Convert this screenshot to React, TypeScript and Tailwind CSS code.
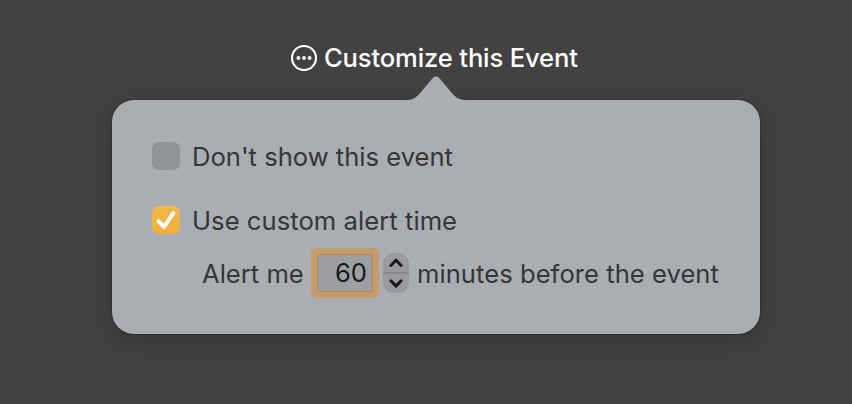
import React, { useState } from 'react'

function MoreIcon() {
  return (
    <svg width="28" height="28" viewBox="0 0 28 28" fill="none" className="shrink-0">
      <circle cx="14" cy="14" r="12" stroke="white" strokeWidth="2.1" />
      <circle cx="8.4" cy="14" r="1.9" fill="white" />
      <circle cx="14" cy="14" r="1.9" fill="white" />
      <circle cx="19.6" cy="14" r="1.9" fill="white" />
    </svg>
  )
}

function Checkbox({ checked, onClick }: { checked: boolean; onClick: () => void }) {
  return (
    <button
      role="checkbox"
      aria-checked={checked}
      onClick={onClick}
      className={`w-7 h-7 mb-[2px] shrink-0 rounded-[7px] ${checked ? 'bg-linear-to-b from-[#f2b84e] to-[#efae3a]' : 'bg-[#919497]'}`}
    >
      {checked && (
        <svg width="28" height="28" viewBox="0 0 28 28" fill="none">
          <path d="M6.5 15.2L11.9 20.9L21.4 7.2" stroke="white" strokeWidth="4" strokeLinecap="round" strokeLinejoin="round" />
        </svg>
      )}
    </button>
  )
}

function Stepper({ onStep }: { onStep: (delta: number) => void }) {
  return (
    <div className="w-[26px] h-10 ml-1 rounded-[10px] bg-[#989a9d] flex flex-col overflow-hidden">
      <button className="h-5 border-b border-[#808285]" onClick={() => onStep(1)}>
        <svg width="26" height="19" viewBox="0 0 26 19" fill="none">
          <path d="M7.9 12.5L13 7.2L18.1 12.5" stroke="#17191a" strokeWidth="3" strokeLinecap="round" strokeLinejoin="round" />
        </svg>
      </button>
      <button className="h-5 border-t border-[#8a8c8f]" onClick={() => onStep(-1)}>
        <svg width="26" height="19" viewBox="0 0 26 19" fill="none">
          <path d="M7.9 6.8L13 12.1L18.1 6.8" stroke="#17191a" strokeWidth="3" strokeLinecap="round" strokeLinejoin="round" />
        </svg>
      </button>
    </div>
  )
}

export default function App() {
  const [hidden, setHidden] = useState(false)
  const [custom, setCustom] = useState(true)
  const [minutes, setMinutes] = useState(60)

  return (
    <div className="w-full h-[404px] bg-[#424242] overflow-hidden font-['Inter',sans-serif] text-[25.6px] leading-8 text-[#343638] whitespace-nowrap">
      {/* Menu item */}
      <div className="h-[100px] pt-[42px] pl-[290px] flex items-start gap-[6px] text-white font-medium">
        <span className="pt-[2px]"><MoreIcon /></span>
        <span className="tracking-[-0.15px]">Customize this Event</span>
      </div>

      {/* Popover */}
      <div className="relative ml-[112px] w-[648px] h-[234px] rounded-[22px] bg-[#aaadb1] pt-[41px] pl-10 shadow-[0_0_2px_rgba(0,0,0,0.55),0_6px_26px_rgba(0,0,0,0.2)]">
        <svg className="absolute -top-6 left-[294px]" width="60" height="25" viewBox="0 0 60 25">
          <path d="M0 25V24C7 24 11 21 15 16L26.5 2.2Q30 -1.6 33.5 2.2L45 16C49 21 53 24 60 24V25Z" fill="#aaadb1" />
        </svg>

        <div className="flex items-center gap-3 h-8">
          <Checkbox checked={hidden} onClick={() => setHidden(!hidden)} />
          <span>Don't show this event</span>
        </div>

        <div className="flex items-center gap-3 h-8 mt-8">
          <Checkbox checked={custom} onClick={() => setCustom(!custom)} />
          <span className="tracking-[0.05px]">Use custom alert time</span>
        </div>

        <div className="flex items-center h-[50px] mt-[11px] pl-[50px]">
          <span className="w-[109px] pt-[2px]">Alert me</span>
          <div className="w-[68px] h-[50px] rounded-[6px] bg-[#c69c6b] p-[6px]">
            <div className="h-full border border-[#b68855] bg-[#9d9fa3] pr-[5px] text-right text-[#17191a] leading-9">
              {minutes}
            </div>
          </div>
          <Stepper onStep={(d) => setMinutes(minutes + d)} />
          <span className="ml-2 pt-[2px] tracking-[0.04px]">minutes before the event</span>
        </div>
      </div>
    </div>
  )
}
